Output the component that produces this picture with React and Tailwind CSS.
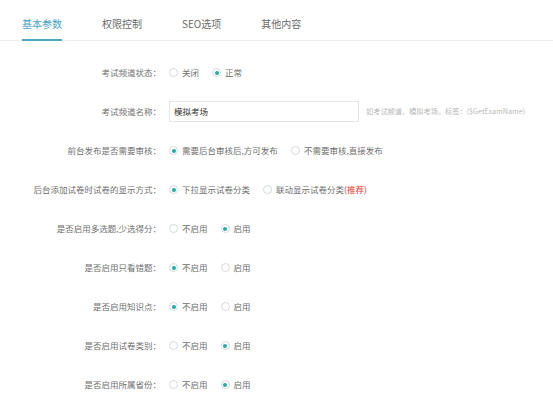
import React from "react";

const FONT = "font-['Noto_Sans_CJK_SC','Noto_Sans',sans-serif]";

function Radio({ checked, children }) {
  return (
    <span className="flex items-center gap-[4px]">
      <span className="w-[9px] h-[9px] rounded-full border border-[#d5dadd] bg-white flex items-center justify-center shrink-0">
        {checked && <span className="w-[4px] h-[4px] rounded-full bg-[#1fb0a4]" />}
      </span>
      <span className="text-[8.5px] leading-none text-[#6e6e6e]">{children}</span>
    </span>
  );
}

function Row({ label, children }) {
  return (
    <div className="flex items-center h-[39px]">
      <div className="w-[161px] text-right text-[8.5px] leading-none text-[#707070] whitespace-nowrap">{label}</div>
      <div className="flex items-center gap-[13px] pl-[8px]">{children}</div>
    </div>
  );
}

function Toggle({ on }) {
  return (
    <>
      <Radio checked={!on}>不启用</Radio>
      <Radio checked={on}>启用</Radio>
    </>
  );
}

export default function App() {
  const tabs = ["基本参数", "权限控制", "SEO选项", "其他内容"];
  return (
    <div className={`w-[553px] h-[400px] bg-white overflow-hidden ${FONT}`}>
      <div className="flex h-[41px] border-b border-[#eceff1] pl-[22px] gap-[40px]">
        {tabs.map((t, i) => (
          <div
            key={t}
            className={
              i === 0
                ? "flex items-center h-[41px] pt-[8px] border-b-2 border-[#4aa8c2] text-[10px] leading-none text-[#45a3bf] whitespace-nowrap"
                : "flex items-center h-[41px] pt-[8px] border-b-2 border-transparent text-[10px] leading-none text-[#6a6a6a] whitespace-nowrap"
            }
          >
            {t}
          </div>
        ))}
      </div>
      <div className="pt-[12px]">
        <Row label="考试频道状态：">
          <Radio checked={false}>关闭</Radio>
          <Radio checked>正常</Radio>
        </Row>
        <Row label="考试频道名称：">
          <div className="flex items-center gap-[7px]">
            <div className="w-[190px] h-[21px] border border-[#e3e7e9] flex items-center px-[4px] text-[8.5px] leading-none text-[#333]">
              模拟考场
            </div>
            <span className="text-[7.2px] leading-none text-[#b8b8b8] whitespace-nowrap">
              如考试频道、模拟考场。标签：($GetExamName)
            </span>
          </div>
        </Row>
        <Row label="前台发布是否需要审核：">
          <Radio checked>需要后台审核后,方可发布</Radio>
          <Radio checked={false}>不需要审核,直接发布</Radio>
        </Row>
        <Row label="后台添加试卷时试卷的显示方式：">
          <Radio checked>下拉显示试卷分类</Radio>
          <Radio checked={false}>
            联动显示试卷分类<span className="text-[#e8322a]">(推荐)</span>
          </Radio>
        </Row>
        <Row label="是否启用多选题,少选得分：">
          <Toggle on />
        </Row>
        <Row label="是否启用只看错题：">
          <Toggle on={false} />
        </Row>
        <Row label="是否启用知识点：">
          <Toggle on={false} />
        </Row>
        <Row label="是否启用试卷类别：">
          <Toggle on />
        </Row>
        <Row label="是否启用所属省份：">
          <Toggle on />
        </Row>
      </div>
    </div>
  );
}
